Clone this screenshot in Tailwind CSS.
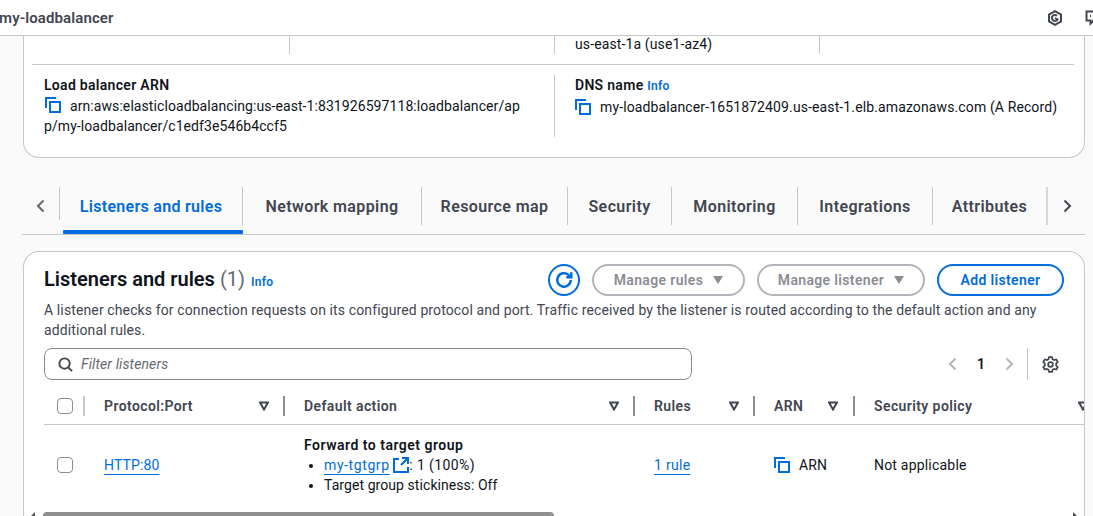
<!DOCTYPE html>
<html lang="en">
<head>
    <meta charset="UTF-8">
    <title>my-loadbalancer</title>
    <script src="https://cdn.jsdelivr.net/npm/@tailwindcss/browser@4"></script>
</head>
<body class="h-[516px] overflow-hidden bg-[#fafafa] font-['Roboto',sans-serif] text-[14px] leading-[20px] tracking-[0.12px] text-[#0f141a]">

    <!-- top bar -->
    <header class="flex h-[36px] items-center justify-between overflow-hidden border-b border-[#c6c6cd] bg-white">
        <span class="ml-[-1px] text-[15px] font-semibold tracking-[0.1px] text-[#424650]">my-loadbalancer</span>
        <div class="mr-[-8px] flex items-center gap-[22px] text-[#424650]">
            <svg class="h-[16px] w-[16px]" viewBox="0 0 16 16" fill="none" stroke="currentColor" stroke-width="2"><path d="M8 1.2 14 4.6v6.8L8 14.8 2 11.4V4.6z"/><path d="M10.8 8.6A3 3 0 1 1 10 5.8"/><path d="m8 8 3 2" /></svg>
            <svg class="h-[16px] w-[16px]" viewBox="0 0 16 16" fill="none" stroke="currentColor" stroke-width="2"><path d="M1.5 1.5h13v9h-6l-3 3v-3h-4z"/><path d="M5 6h1M8 6h1M11 6h1"/></svg>
        </div>
    </header>

    <!-- details card, scrolled so only its tail shows -->
    <section class="mr-[8px] ml-[23px] h-[122px] rounded-b-[16px] border-x border-b border-[#c6c6cd] bg-white pr-[10px] pl-[8px]">
        <div class="grid h-[29px] grid-cols-[257px_265px_265px_1fr] border-b border-[#c6c6cd]">
            <div class="h-[18px]"></div>
            <div class="h-[18px] border-l border-[#c6c6cd]"></div>
            <div class="h-[18px] border-l border-[#c6c6cd] pl-[20px] leading-[17px]">us-east-1a (use1-az4)</div>
            <div class="h-[18px] border-l border-[#c6c6cd]"></div>
        </div>
        <div class="mt-[10px] grid grid-cols-[522px_1fr]">
            <div class="h-[62px] pl-[12px]">
                <div class="font-semibold tracking-[0.3px]">Load balancer ARN</div>
                <div class="mt-[1px] w-[482px] break-all tracking-[0.08px]"><svg class="mr-[9px] ml-[1px] inline-block h-[16px] w-[16px] align-[-2px] text-[#006ce0]" viewBox="0 0 16 16" fill="none" stroke="currentColor" stroke-width="2"><path d="M1 11V1h10"/><path d="M5 5h10v10H5z"/></svg>arn:aws:elasticloadbalancing:us-east-1:831926597118:loadbalancer/app/my-loadbalancer/c1edf3e546b4ccf5</div>
            </div>
            <div class="h-[62px] border-l border-[#c6c6cd] pl-[20px]">
                <div class="font-semibold tracking-[0.3px]">DNS name <span class="text-[12px] font-semibold text-[#006ce0]">Info</span></div>
                <div class="mt-[1px] flex items-center gap-[9px] whitespace-nowrap"><svg class="h-[16px] w-[16px] text-[#006ce0]" viewBox="0 0 16 16" fill="none" stroke="currentColor" stroke-width="2"><path d="M1 11V1h10"/><path d="M5 5h10v10H5z"/></svg>my-loadbalancer-1651872409.us-east-1.elb.amazonaws.com (A Record)</div>
            </div>
        </div>
    </section>

    <!-- tabs -->
    <nav class="mt-[29px] mr-[8px] ml-[22px] flex h-[48px] items-start border-b border-[#c6c6cd] text-[16px] font-semibold tracking-[0.4px] text-[#424650]">
        <div class="flex h-[38px] w-[37px] shrink-0 items-center justify-center text-[#656871]">
            <svg class="h-[16px] w-[16px]" viewBox="0 0 16 16" fill="none" stroke="currentColor" stroke-width="2"><path d="M10.5 2.5 5 8l5.5 5.5"/></svg>
        </div>
        <div class="relative flex h-[47px] w-[183px] shrink-0 items-start justify-center border-l border-[#c6c6cd] pt-[10px] tracking-[0.3px] text-[#006ce0] [border-image:linear-gradient(#c6c6cd_70%,transparent_70%)_1]">
            Listeners and rules
            <span class="absolute right-[-1px] bottom-0 left-[3px] h-[4px] rounded-[1px] bg-[#006ce0]"></span>
        </div>
        <div class="flex h-[38px] w-[179px] shrink-0 justify-center border-l border-[#c6c6cd] pt-[10px]">Network mapping</div>
        <div class="flex h-[38px] w-[146px] shrink-0 justify-center border-l border-[#c6c6cd] pt-[10px]">Resource map</div>
        <div class="flex h-[38px] w-[104px] shrink-0 justify-center border-l border-[#c6c6cd] pt-[10px]">Security</div>
        <div class="flex h-[38px] w-[126px] shrink-0 justify-center border-l border-[#c6c6cd] pt-[10px]">Monitoring</div>
        <div class="flex h-[38px] w-[135px] shrink-0 justify-center border-l border-[#c6c6cd] pt-[10px]">Integrations</div>
        <div class="flex h-[38px] w-[114px] shrink-0 justify-center border-l border-[#c6c6cd] pt-[10px]">Attributes</div>
        <div class="flex h-[38px] flex-1 items-center justify-center border-l-2 border-[#d8d8dc] text-[#424650]">
            <svg class="h-[16px] w-[16px]" viewBox="0 0 16 16" fill="none" stroke="currentColor" stroke-width="2"><path d="M5.5 2.5 11 8l-5.5 5.5"/></svg>
        </div>
    </nav>

    <!-- listeners card -->
    <section class="mt-[16px] mr-[8px] ml-[23px] h-[270px] overflow-hidden rounded-t-[16px] border-x border-t border-[#c6c6cd] bg-white">
        <div class="flex h-[44px] items-start justify-between pt-[12px] pr-[20px] pl-[20px]">
            <h2 class="mt-[1px] text-[20px] leading-[28px] font-semibold tracking-normal">Listeners and rules <span class="font-normal text-[#656871]">(1)</span> <span class="ml-[1px] text-[12px] font-semibold tracking-[0.3px] text-[#006ce0]">Info</span></h2>
            <div class="flex items-center gap-[12px] font-semibold tracking-[0.35px]">
                <button class="flex h-[32px] w-[32px] items-center justify-center rounded-full border-2 border-[#006ce0] text-[#006ce0]">
                    <svg class="h-[18px] w-[18px]" viewBox="0 0 16 16" fill="none" stroke="currentColor" stroke-width="2.2"><path d="M14 8a6 6 0 1 1-2-4.5L14 5"/><path d="M14.5 1v4.5H10"/></svg>
                </button>
                <button class="flex h-[32px] w-[153px] items-center justify-center gap-[10px] rounded-full border-2 border-[#b4b4bb] text-[#8c8c94]">Manage rules <svg class="h-[10px] w-[10px]" viewBox="0 0 10 10" fill="#8c8c94"><path d="M0 1h10L5 9z"/></svg></button>
                <button class="flex h-[32px] w-[168px] items-center justify-center gap-[10px] rounded-full border-2 border-[#b4b4bb] text-[#8c8c94]">Manage listener <svg class="h-[10px] w-[10px]" viewBox="0 0 10 10" fill="#8c8c94"><path d="M0 1h10L5 9z"/></svg></button>
                <button class="h-[32px] w-[127px] rounded-full border-2 border-[#006ce0] text-[#006ce0]">Add listener</button>
            </div>
        </div>
        <p class="mt-[4px] pr-[40px] pl-[20px] text-[#424650]">A listener checks for connection requests on its configured protocol and port. Traffic received by the listener is routed according to the default action and any additional rules.</p>

        <div class="mt-[8px] flex h-[32px] items-center pl-[20px]">
            <div class="flex h-[32px] w-[648px] items-center gap-[8px] rounded-[8px] border border-[#8c8c94] pl-[13px] text-[#656871]">
                <svg class="h-[15px] w-[15px] text-[#424650]" viewBox="0 0 16 16" fill="none" stroke="currentColor" stroke-width="2"><circle cx="7" cy="7" r="5.5"/><path d="m11 11 4 4"/></svg>
                <span class="italic">Filter listeners</span>
            </div>
            <div class="ml-auto flex h-[32px] items-center pr-[25px]">
                <svg class="h-[16px] w-[16px] text-[#b4b4bb]" viewBox="0 0 16 16" fill="none" stroke="currentColor" stroke-width="2"><path d="M10.5 2.5 5 8l5.5 5.5"/></svg>
                <span class="w-[40px] text-center font-semibold">1</span>
                <svg class="h-[16px] w-[16px] text-[#b4b4bb]" viewBox="0 0 16 16" fill="none" stroke="currentColor" stroke-width="2"><path d="M5.5 2.5 11 8l-5.5 5.5"/></svg>
                <span class="ml-[10px] flex h-[32px] items-center border-l border-[#c6c6cd] pl-[14px]">
                    <svg class="h-[17px] w-[17px] text-[#424650]" viewBox="0 0 16 16" fill="none" stroke="currentColor" stroke-width="1.6"><path d="M6.6 1h2.8l.5 2 1.5.8 2-.6 1.4 2.4-1.5 1.5v1.8l1.5 1.5-1.4 2.4-2-.6-1.5.8-.5 2H6.6l-.5-2-1.5-.8-2 .6-1.4-2.4 1.5-1.5V7.1L1.2 5.6l1.4-2.4 2 .6 1.5-.8z"/><circle cx="8" cy="8" r="2.2"/></svg>
                </span>
            </div>
        </div>

        <!-- table -->
        <div class="mt-[9px] ml-[20px] overflow-hidden">
            <div class="grid h-[36px] w-[1100px] grid-cols-[39px_200px_350px_120px_100px_240px] items-center border-b border-[#c6c6cd] pb-[1px] font-semibold tracking-[0.4px] text-[#424650]">
                <div class="flex h-[20px] items-center pl-[13px]"><span class="h-[16px] w-[16px] rounded-[4px] border border-[#8c8c94] bg-white"></span></div>
                <div class="flex h-[20px] items-center justify-between border-l-2 border-[#c6c6cd] pr-[14px] pl-[19px]">Protocol:Port <svg class="h-[10px] w-[10px]" viewBox="0 0 10 10" fill="none" stroke="#424650" stroke-width="2"><path d="M1 1.5h8L5 8.5z"/></svg></div>
                <div class="flex h-[20px] items-center justify-between border-l-2 border-[#8c8c94] pr-[14px] pl-[19px]">Default action <svg class="h-[10px] w-[10px]" viewBox="0 0 10 10" fill="none" stroke="#424650" stroke-width="2"><path d="M1 1.5h8L5 8.5z"/></svg></div>
                <div class="flex h-[20px] items-center justify-between border-l-2 border-[#8c8c94] pr-[14px] pl-[19px]">Rules <svg class="h-[10px] w-[10px]" viewBox="0 0 10 10" fill="none" stroke="#424650" stroke-width="2"><path d="M1 1.5h8L5 8.5z"/></svg></div>
                <div class="flex h-[20px] items-center justify-between border-l-2 border-[#8c8c94] pr-[15px] pl-[19px]">ARN <svg class="h-[10px] w-[10px]" viewBox="0 0 10 10" fill="none" stroke="#424650" stroke-width="2"><path d="M1 1.5h8L5 8.5z"/></svg></div>
                <div class="flex h-[20px] items-center border-l-2 border-[#8c8c94] pl-[19px]"><span class="w-[204px]">Security policy</span> <svg class="h-[10px] w-[10px]" viewBox="0 0 10 10" fill="none" stroke="#424650" stroke-width="2"><path d="M1 1.5h8L5 8.5z"/></svg></div>
            </div>
            <div class="grid h-[80px] w-[1100px] grid-cols-[39px_200px_350px_120px_100px_240px] items-center">
                <div class="pl-[13px]"><span class="block h-[16px] w-[16px] rounded-[4px] border border-[#8c8c94] bg-white"></span></div>
                <div class="pl-[21px]"><a class="text-[#006ce0] underline underline-offset-[4px]">HTTP:80</a></div>
                <div class="pl-[21px]">
                    <div class="font-semibold tracking-[0.5px]">Forward to target group</div>
                    <ul class="list-disc pl-[20px]">
                        <li><a class="tracking-[0.6px] text-[#006ce0] underline underline-offset-[4px]">my-tgtgrp</a> <svg class="inline-block h-[16px] w-[16px] align-[-3px] text-[#006ce0]" viewBox="0 0 16 16" fill="none" stroke="currentColor" stroke-width="2"><path d="M6 2H1v13h14v-5"/><path d="M9 1h6v6M15 1 8 8"/></svg><span class="tracking-[0.4px]">: 1 (100%)</span></li>
                        <li class="tracking-[0.07px]">Target group stickiness: Off</li>
                    </ul>
                </div>
                <div class="pl-[21px]"><a class="tracking-[0.3px] text-[#006ce0] underline underline-offset-[4px]">1 rule</a></div>
                <div class="flex items-center gap-[9px] pl-[21px]"><svg class="h-[16px] w-[16px] text-[#006ce0]" viewBox="0 0 16 16" fill="none" stroke="currentColor" stroke-width="2"><path d="M1 11V1h10"/><path d="M5 5h10v10H5z"/></svg>ARN</div>
                <div class="pl-[21px] tracking-[0.2px]">Not applicable</div>
            </div>
        </div>

        <!-- horizontal scrollbar -->
        <div class="mt-[7px] flex h-[4px] items-start pl-[6px]">
            <svg class="h-[6px] w-[8px]" viewBox="0 0 8 6" fill="#505050"><path d="M0 5 5 0v6z"/></svg>
            <div class="ml-[5px] h-[8px] w-[511px] rounded-full bg-[#8f8f8f]"></div>
            <svg class="mr-[6px] ml-auto h-[6px] w-[8px]" viewBox="0 0 8 6" fill="#505050"><path d="M8 5 3 0v6z"/></svg>
        </div>
    </section>
</body>
</html>
